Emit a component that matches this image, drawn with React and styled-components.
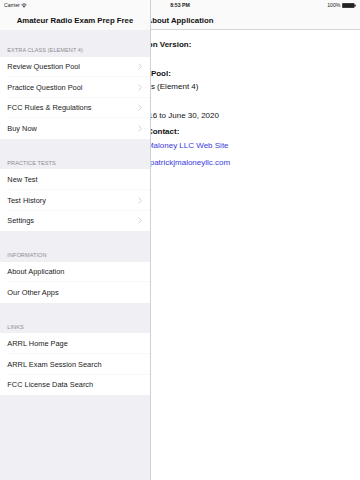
import React from "react";
import styled, { createGlobalStyle } from "styled-components";

const GlobalStyle = createGlobalStyle`
  html, body {
    margin: 0;
    padding: 0;
    background: #ffffff;
    font-family: "Liberation Sans", Arial, sans-serif;
    -webkit-font-smoothing: antialiased;
  }
`;

const sections = [
  {
    title: "EXTRA CLASS (ELEMENT 4)",
    first: true,
    rows: [
      { label: "Review Question Pool", more: true },
      { label: "Practice Question Pool", more: true },
      { label: "FCC Rules & Regulations", more: true },
      { label: "Buy Now", more: true },
    ],
  },
  {
    title: "PRACTICE TESTS",
    rows: [
      { label: "New Test" },
      { label: "Test History", more: true },
      { label: "Settings", more: true },
    ],
  },
  {
    title: "INFORMATION",
    rows: [{ label: "About Application" }, { label: "Our Other Apps" }],
  },
  {
    title: "LINKS",
    rows: [
      { label: "ARRL Home Page" },
      { label: "ARRL Exam Session Search" },
      { label: "FCC License Data Search" },
    ],
  },
];

const Chevron = () => (
  <svg width="4" height="7" viewBox="0 0 4 7">
    <polyline
      points="0.6,0.6 3.3,3.5 0.6,6.4"
      fill="none"
      stroke="#c7c7cc"
      strokeWidth="0.8"
    />
  </svg>
);

const Wifi = () => (
  <svg width="6" height="5" viewBox="0 0 12 10">
    <path d="M6 9.5 L8.2 7 A3.2 3.2 0 0 0 3.8 7 Z" fill="#222" />
    <path d="M2.4 5.5 A5.2 5.2 0 0 1 9.6 5.5" stroke="#222" strokeWidth="1.3" fill="none" />
    <path d="M0.8 3.6 A7.6 7.6 0 0 1 11.2 3.6" stroke="#222" strokeWidth="1.3" fill="none" />
  </svg>
);

const Battery = () => (
  <svg width="14" height="5" viewBox="0 0 14 5">
    <rect x="0.3" y="0.3" width="12" height="4.4" rx="0.8" fill="#222" stroke="#222" strokeWidth="0.6" />
    <rect x="12.6" y="1.5" width="1.2" height="2" rx="0.4" fill="#222" />
  </svg>
);

const App = () => {
  return (
    <>
      <GlobalStyle />
      <Screen>
        <Detail>
          <NavBar bordered>
            <NavTitle>About Application</NavTitle>
          </NavBar>
          <InfoList>
            <InfoBlock>
              <InfoLabel>Application Version:</InfoLabel>
              <InfoValue>1.0</InfoValue>
            </InfoBlock>
            <InfoBlock>
              <InfoLabel>Question Pool:</InfoLabel>
              <InfoValue>Extra Class (Element 4)</InfoValue>
            </InfoBlock>
            <InfoBlock>
              <InfoLabel>Valid:</InfoLabel>
              <InfoValue>July 1, 2016 to June 30, 2020</InfoValue>
            </InfoBlock>
            <InfoBlock>
              <InfoLabel>Support Contact:</InfoLabel>
              <InfoLink>Patrick J Maloney LLC Web Site</InfoLink>
              <InfoLink>mailbox@patrickjmaloneyllc.com</InfoLink>
            </InfoBlock>
          </InfoList>
        </Detail>

        <Sidebar>
          <NavBar>
            <NavTitle>Amateur Radio Exam Prep Free</NavTitle>
          </NavBar>
          <TableArea>
            {sections.map((section) => (
              <Section key={section.title}>
                <SectionHeader first={section.first}>{section.title}</SectionHeader>
                <Group>
                  {section.rows.map((row) => (
                    <Row key={row.label}>
                      <RowLabel>{row.label}</RowLabel>
                      {row.more && <Chevron />}
                    </Row>
                  ))}
                </Group>
              </Section>
            ))}
          </TableArea>
        </Sidebar>

        <StatusBar>
          <StatusSide>
            Carrier <Wifi />
          </StatusSide>
          <StatusTime>8:53 PM</StatusTime>
          <StatusSide right>
            100% <Battery />
          </StatusSide>
        </StatusBar>
      </Screen>
    </>
  );
};

const Screen = styled.div`
  position: relative;
  width: 360px;
  height: 480px;
  overflow: hidden;
  background: #ffffff;
  color: #111111;
`;

const Detail = styled.div`
  display: flex;
  flex-direction: column;
  height: 100%;
  background: #ffffff;
`;

const NavBar = styled.div`
  height: 30px;
  box-sizing: border-box;
  padding-top: 11px;
  display: flex;
  align-items: center;
  justify-content: center;
  background: #fafafa;
  border-bottom: 0.6px solid ${(p) => (p.bordered ? "#d6d6d8" : "transparent")};
  flex-shrink: 0;
`;

const NavTitle = styled.div`
  font-size: 7.8px;
  font-weight: 700;
  color: #111111;
  white-space: nowrap;
`;

const InfoList = styled.div`
  display: flex;
  flex-direction: column;
  gap: 3px;
  padding: 8px 0 0 114px;
`;

const InfoBlock = styled.div`
  display: flex;
  flex-direction: column;
`;

const InfoLabel = styled.div`
  font-size: 8px;
  font-weight: 700;
  line-height: 13px;
  white-space: nowrap;
`;

const InfoValue = styled.div`
  font-size: 8px;
  line-height: 13px;
  white-space: nowrap;
`;

const InfoLink = styled.div`
  font-size: 8px;
  line-height: 16.8px;
  color: #3b3bdc;
  white-space: nowrap;
`;

const Sidebar = styled.div`
  position: absolute;
  top: 0;
  left: 0;
  bottom: 0;
  width: 150px;
  display: flex;
  flex-direction: column;
  background: #efeff4;
  border-right: 0.6px solid #d0d0d4;
`;

const TableArea = styled.div`
  flex: 1;
  display: flex;
  flex-direction: column;
`;

const Section = styled.div`
  display: flex;
  flex-direction: column;
`;

const SectionHeader = styled.div`
  height: ${(p) => (p.first ? "26.5px" : "30.5px")};
  box-sizing: border-box;
  display: flex;
  align-items: flex-end;
  padding: 0 0 3.8px 7.3px;
  font-size: 5.6px;
  color: #8e8e93;
  letter-spacing: 0.05px;
`;

const Group = styled.div`
  background: #ffffff;
`;

const Row = styled.div`
  height: 20.6px;
  box-sizing: border-box;
  display: flex;
  align-items: center;
  justify-content: space-between;
  padding: 0 8px 0 7.3px;
  box-shadow: inset 7.3px -0.6px 0 0 #ffffff, inset 0 -0.6px 0 0 #e4e4e8;

  &:last-child {
    box-shadow: none;
  }
`;

const RowLabel = styled.span`
  font-size: 7.4px;
  color: #1a1a1a;
  white-space: nowrap;
`;

const StatusBar = styled.div`
  position: absolute;
  top: 0;
  left: 0;
  right: 0;
  height: 10px;
  display: grid;
  grid-template-columns: 1fr auto 1fr;
  align-items: center;
  padding: 0 4px;
  font-size: 5.2px;
  color: #222222;
`;

const StatusSide = styled.div`
  display: flex;
  align-items: center;
  gap: 1.5px;
  justify-content: ${(p) => (p.right ? "flex-end" : "flex-start")};
`;

const StatusTime = styled.div`
  font-weight: 700;
`;

export default App;
